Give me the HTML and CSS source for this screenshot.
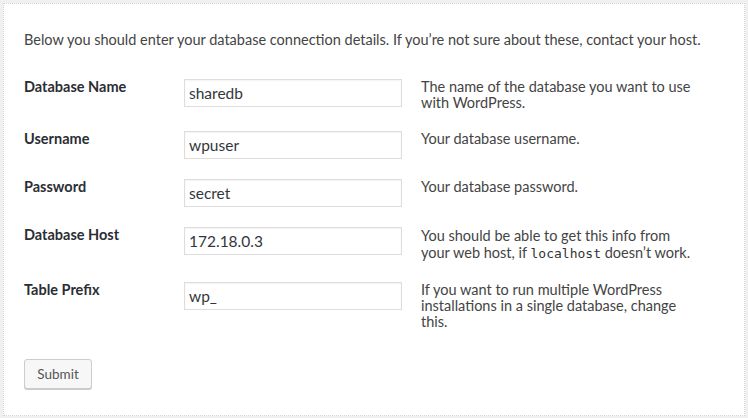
FILE: index.html
```html
<!DOCTYPE html>
<html lang="en">
<head>
<meta charset="utf-8">
<title>Database connection</title>
<link rel="stylesheet" href="styles.css">
</head>
<body>
<div class="panel">
  <p class="intro">Below you should enter your database connection details. If you’re not sure about these, contact your host.</p>
  <table class="form-table">
    <tr>
      <th>Database Name</th>
      <td class="field"><input type="text" value="sharedb"></td>
      <td class="desc">The name of the database you want to use with WordPress.</td>
    </tr>
    <tr>
      <th>Username</th>
      <td class="field"><input type="text" value="wpuser"></td>
      <td class="desc">Your database username.</td>
    </tr>
    <tr>
      <th>Password</th>
      <td class="field"><input type="text" value="secret"></td>
      <td class="desc">Your database password.</td>
    </tr>
    <tr>
      <th>Database Host</th>
      <td class="field"><input type="text" value="172.18.0.3"></td>
      <td class="desc desc-code">You should be able to get this info from your web host, if <code>localhost</code> doesn’t work.</td>
    </tr>
    <tr>
      <th>Table Prefix</th>
      <td class="field"><input type="text" value="wp_"></td>
      <td class="desc">If you want to run multiple WordPress installations in a single database, change this.</td>
    </tr>
  </table>
  <p class="step"><button type="button" class="button">Submit</button></p>
</div>
</body>
</html>
```

FILE: styles.css
```css
html, body {
  margin: 0;
  padding: 0;
  background: #f0f0f0;
}
body {
  font-family: Lato, "Open Sans", sans-serif;
  font-size: 14.5px;
  color: #444;
  padding: 3px 3px 0 3px;
  height: 418px;
  box-sizing: border-box;
  overflow: hidden;
}
.panel {
  background: #fff;
  border: 1px dotted #d2d2d2;
  padding: 26px 20px 26px 20px;
}
.intro {
  margin: 0 0 19px 0;
  line-height: 20px;
}
.form-table {
  border-collapse: collapse;
  border-spacing: 0;
}
.form-table th {
  width: 160px;
  padding: 8px 0 10px 0;
  text-align: left;
  vertical-align: top;
  font-weight: 700;
  color: #2a2e33;
  line-height: 20px;
}
.form-table td {
  vertical-align: top;
  padding: 10px 0;
}
.form-table .field {
  width: 237px;
}
.form-table input {
  display: block;
  box-sizing: border-box;
  width: 218px;
  height: 28px;
  margin: 0;
  padding: 2px 4px;
  border: 1px solid #ddd;
  box-shadow: inset 0 1px 2px rgba(0,0,0,0.05);
  font-family: Lato, "Open Sans", sans-serif;
  font-size: 15.5px;
  color: #32373c;
  background: #fff;
  outline: none;
}
.form-table .desc {
  width: 277px;
  line-height: 16px;
  color: #444;
}
.form-table .desc-code {
  line-height: 17px;
}
code {
  font-family: "DejaVu Sans Mono", monospace;
  font-size: 13px;
  line-height: 17px;
  color: #333;
}
.step {
  margin: 19px 0 0 0;
}
.button {
  display: block;
  box-sizing: border-box;
  width: 68px;
  height: 30px;
  padding: 0;
  border: 1px solid #ccc;
  border-radius: 3px;
  background: #f7f7f7;
  box-shadow: 0 1px 0 #ccc;
  font-family: Lato, "Open Sans", sans-serif;
  font-size: 13.5px;
  color: #555;
}
```
